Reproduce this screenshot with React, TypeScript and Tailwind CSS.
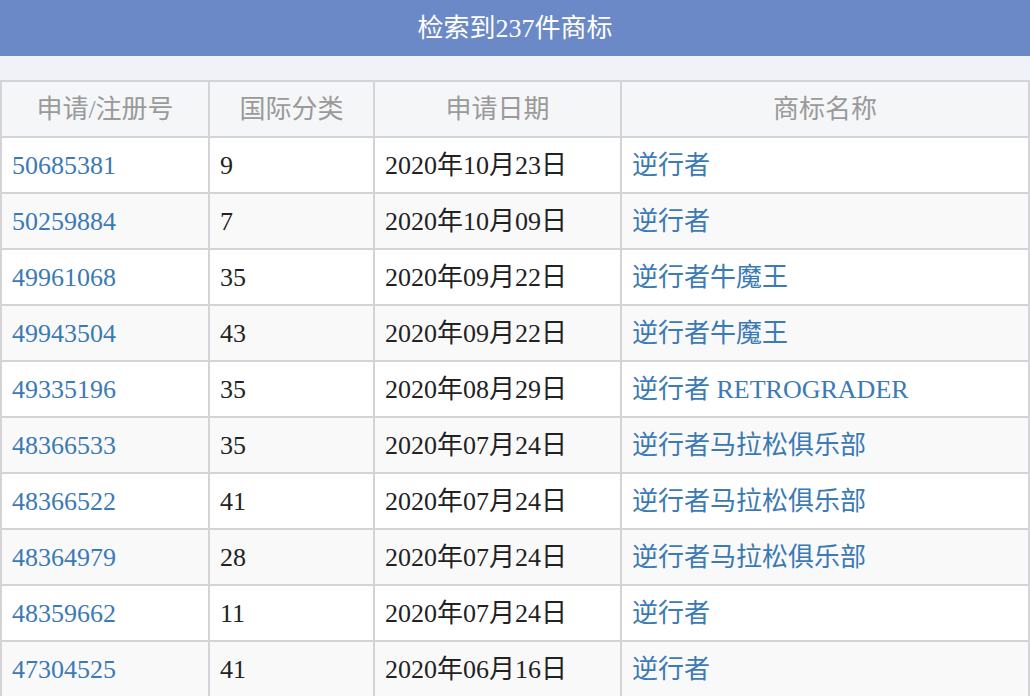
const rows = [
  ["50685381","9","2020年10月23日","逆行者"],
  ["50259884","7","2020年10月09日","逆行者"],
  ["49961068","35","2020年09月22日","逆行者牛魔王"],
  ["49943504","43","2020年09月22日","逆行者牛魔王"],
  ["49335196","35","2020年08月29日","逆行者 RETROGRADER"],
  ["48366533","35","2020年07月24日","逆行者马拉松俱乐部"],
  ["48366522","41","2020年07月24日","逆行者马拉松俱乐部"],
  ["48364979","28","2020年07月24日","逆行者马拉松俱乐部"],
  ["48359662","11","2020年07月24日","逆行者"],
  ["47304525","41","2020年06月16日","逆行者"],
];
export default function App() {
  return (
    <div className="w-[1030px] h-[696px] overflow-hidden bg-[#f0f2f8]" style={{fontFamily:'"Liberation Serif","Noto Sans CJK SC",serif'}}>
      <div className="h-[56px] bg-[#6b89c6] text-white text-[26px] flex items-center justify-center">检索到237件商标</div>
      <div className="h-[24px]" />
      <table className="border-collapse w-[1030px] text-[26px] table-fixed">
        <colgroup><col className="w-[208px]"/><col className="w-[165px]"/><col className="w-[247px]"/><col /></colgroup>
        <thead>
          <tr className="h-[56px] bg-[#f5f6f8] text-[#9a9a9a]">
            {["申请/注册号","国际分类","申请日期","商标名称"].map(h=>(
              <th key={h} className="border-2 border-[#d4d4d6] font-normal text-center">{h}</th>))}
          </tr>
        </thead>
        <tbody>
          {rows.map((r,i)=>(
            <tr key={i} className={`h-[56px] ${i%2===0?"bg-white":"bg-[#f9f9f9]"}`}>
              <td className="border-2 border-[#d4d4d6] px-[10px] text-[#3b7ab5]">{r[0]}</td>
              <td className="border-2 border-[#d4d4d6] px-[10px] text-[#222]">{r[1]}</td>
              <td className="border-2 border-[#d4d4d6] px-[10px] text-[#222]">{r[2]}</td>
              <td className="border-2 border-[#d4d4d6] px-[10px] text-[#3b7ab5]">{r[3]}</td>
            </tr>))}
        </tbody>
      </table>
    </div>
  );
}
